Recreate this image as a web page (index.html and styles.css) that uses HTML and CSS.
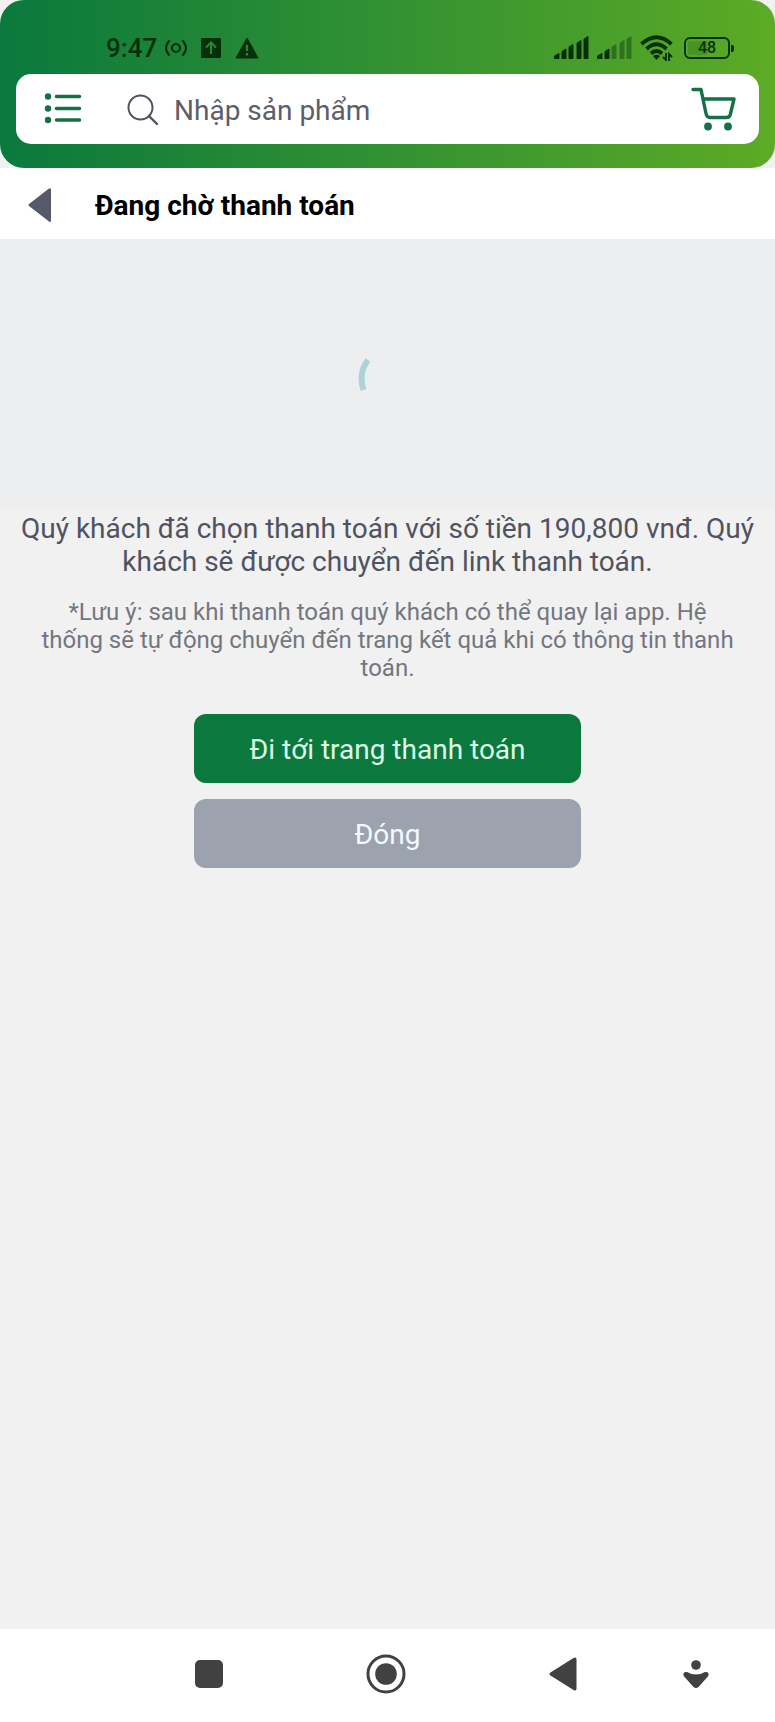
FILE: index.html
```html
<!DOCTYPE html>
<html lang="vi">
<head>
<meta charset="utf-8">
<meta name="viewport" content="width=device-width, initial-scale=1">
<title>Đang chờ thanh toán</title>
<link rel="stylesheet" href="styles.css">
</head>
<body>
<div class="app">
  <header class="header">
    <div class="status">
      <div class="status-left">
        <span class="clock">9:47</span>
        <svg class="icon-hotspot" width="22" height="18" viewBox="0 0 22 18" fill="none" stroke="currentColor" stroke-width="2.200" stroke-linecap="round"><circle cx="11" cy="9" r="4"/><path d="M4 2Q-2 9 4 16M18 2Q24 9 18 16"/></svg>
        <svg class="icon-upload" width="20" height="20" viewBox="0 0 20 20"><rect width="20" height="20" rx="1" fill="currentColor"/><path d="M10 16V5M5 9.500L10 4.500L15 9.500" fill="none" stroke="#2b8535" stroke-width="2"/></svg>
        <svg class="icon-warning" width="24" height="22" viewBox="0 0 24 22"><path d="M12 1L23 21H1Z" fill="currentColor" stroke="currentColor" stroke-linejoin="round"/><path d="M12 8V14M12 16V18.500" stroke="#2b8535" stroke-width="2.200"/></svg>
      </div>
      <div class="status-right">
        <svg width="35" height="24" viewBox="0 0 35 24" fill="currentColor" stroke="currentColor" stroke-linejoin="round"><path d="M.5 22.500V20L5 17.500V22.500ZM8 22.500V15.500L12 13V22.500ZM15 22.500V11L19 8.500V22.500ZM23 22.500V7L27 4.500V22.500ZM30 22.500V3L34 .5V22.500Z"/></svg>
        <svg width="35" height="24" viewBox="0 0 35 24" fill="currentColor" stroke="currentColor" stroke-linejoin="round"><path d="M.5 22.500V20L5 17.500V22.500ZM8 22.500V15.500L12 13V22.500Z"/><path opacity=".4" d="M15 22.500V11L19 8.500V22.500ZM23 22.500V7L27 4.500V22.500ZM30 22.500V3L34 .5V22.500Z"/></svg>
        <svg width="34" height="26" viewBox="0 0 34 26" fill="none" stroke="currentColor" stroke-width="3.800"><path d="M1.500 9Q16.500-4.500 31.500 9M6.500 14Q16.500 4.500 26.500 14M11 18.500Q16.500 13.500 22 18.500"/><path d="M13 21Q16.500 18.500 20 21L16.500 25Z" fill="currentColor" stroke="none"/><path d="M26 18V25L23 22M29 26V19L32 22" stroke-width="1.800"/></svg>
        <span class="battery"><span class="battery-fill"></span><span class="battery-text">48</span></span>
      </div>
    </div>
    <form class="search">
      <button class="icon-button" type="button" aria-label="Menu">
        <svg width="38" height="32" viewBox="0 0 38 32" stroke="currentColor" stroke-width="3.600" stroke-linecap="round" fill="currentColor"><path d="M12.500 3.500H35.500M12.500 15.500H35.500M12.500 27H35.500"/><g stroke="none"><circle cx="4" cy="3.500" r="3.200"/><circle cx="4" cy="15.500" r="3.200"/><circle cx="4" cy="27" r="3.200"/></g></svg>
      </button>
      <label class="search-label" for="query" aria-label="Nhập sản phẩm">
        <svg width="32" height="32" viewBox="0 0 32 32" fill="none" stroke="currentColor" stroke-width="2" stroke-linecap="round"><circle cx="13.500" cy="14.500" r="12"/><path d="M22 23L30 31" stroke-width="2.400"/></svg>
      </label>
      <input class="search-input" id="query" type="text" placeholder="Nhập sản phẩm">
      <button class="icon-button" type="button" aria-label="Giỏ hàng">
        <svg width="46" height="44" viewBox="0 0 46 44" fill="none" stroke="currentColor" stroke-width="3.400" stroke-linecap="round" stroke-linejoin="round"><path d="M2 2.500H10L15 26.500Q15.800 30.500 19 30.500H35.500Q38.500 30.500 39.300 27.500L43 12H12.500"/><g fill="currentColor" stroke="none"><circle cx="17" cy="39.500" r="3.900"/><circle cx="37" cy="39.500" r="3.900"/></g></svg>
      </button>
    </form>
  </header>
  <div class="titlebar">
    <button class="icon-button back" type="button" aria-label="Quay lại">
      <svg width="24" height="36" viewBox="0 0 24 36" fill="currentColor"><path d="M1 16L21 .5Q23-.5 23 2V32Q23 35 21 33.500L1 18Q0 17 1 16Z"/></svg>
    </button>
    <h1 class="title">Đang chờ thanh toán</h1>
  </div>
  <main class="content">
    <div class="loader" role="status" aria-label="Đang tải">
      <svg width="60" height="60" viewBox="0 0 60 60" fill="none" stroke="#aed2d8" stroke-width="6"><path d="M10 16Q0 29 5.500 46"/></svg>
    </div>
    <p class="message">Quý khách đã chọn thanh toán với số tiền 190,800 vnđ. Quý khách sẽ được chuyển đến link thanh toán.</p>
    <p class="note">*Lưu ý: sau khi thanh toán quý khách có thể quay lại app. Hệ thống sẽ tự động chuyển đến trang kết quả khi có thông tin thanh toán.</p>
    <div class="actions">
      <button class="button primary" type="button">Đi tới trang thanh toán</button>
      <button class="button secondary" type="button">Đóng</button>
    </div>
  </main>
  <nav class="navbar" aria-label="Điều hướng">
    <button class="icon-button" type="button" aria-label="Gần đây"><svg width="30" height="30" viewBox="0 0 30 30"><rect x="1" y="1" width="28" height="28" rx="5" fill="currentColor"/></svg></button>
    <button class="icon-button" type="button" aria-label="Trang chủ"><svg width="40" height="40" viewBox="0 0 40 40"><circle cx="20" cy="20" r="18" fill="none" stroke="currentColor" stroke-width="3"/><circle cx="20" cy="20" r="10.800" fill="currentColor"/></svg></button>
    <button class="icon-button" type="button" aria-label="Trở về"><svg width="28" height="34" viewBox="0 0 28 34" fill="currentColor"><path d="M1.500 15.500L24.500 1Q27.500-.5 27.500 2.500V31.500Q27.500 34.500 24.500 33L1.500 18.500Q-.5 17 1.500 15.500Z"/></svg></button>
    <button class="icon-button" type="button" aria-label="Ẩn thanh"><svg width="26" height="28" viewBox="0 0 26 28" fill="currentColor"><circle cx="13" cy="5" r="4.800"/><path d="M4 12Q13 17 22 12Q26 11.500 25.500 15Q25.500 16 24 17.500L15.500 27Q13 29 10.500 27L2 17.500Q.5 16 .5 15Q0 11.500 4 12Z"/></svg></button>
  </nav>
</div>
</body>
</html>
```
FILE: styles.css
```css
* {
  box-sizing: border-box;
}

body {
  margin: 0;
  background: #f1f1f1;
  color: #50535f;
  font-family: Roboto, "Noto Sans", sans-serif;
}

svg {
  display: block;
  flex: none;
}

button,
input {
  font: inherit;
}

.app {
  display: flex;
  flex-direction: column;
  min-height: 100vh;
}

.header {
  padding: 22px 16px 24px;
  border-radius: 24px;
  background: linear-gradient(90deg, #0a793d, #329132 50%, #5dab25);
}

.status {
  display: flex;
  justify-content: space-between;
  align-items: center;
  height: 52px;
  padding: 0 25px 0 90px;
  color: #06300a;
}

.status-left,
.status-right {
  display: flex;
  align-items: center;
}

.status-right {
  gap: 8px;
}

.clock {
  font-size: 26px;
  font-weight: 500;
  line-height: 32px;
}

.icon-hotspot {
  margin-left: 8px;
}

.icon-upload,
.icon-warning {
  margin-left: 14px;
}

.battery {
  display: flex;
  position: relative;
  align-items: center;
  justify-content: center;
  width: 46px;
  height: 22px;
  margin: 0 4px 0 2px;
  border: 2px solid currentColor;
  border-radius: 6px;
}

.battery::after {
  content: "";
  position: absolute;
  top: 6px;
  right: -6px;
  width: 3px;
  height: 7px;
  border-radius: 0 2px 2px 0;
  background: currentColor;
}

.battery-fill {
  position: absolute;
  top: 2px;
  bottom: 2px;
  left: 2px;
  width: 48%;
  border-radius: 3px;
  background: #489322;
}

.battery-text {
  position: relative;
  font-size: 16px;
  font-weight: 500;
  line-height: 18px;
}

.search {
  display: flex;
  align-items: center;
  height: 70px;
  padding: 0 22px 0 28px;
  border-radius: 15px;
  background: #fff;
}

.icon-button {
  display: flex;
  align-items: center;
  justify-content: center;
  padding: 0;
  border: 0;
  background: none;
  color: #157145;
  cursor: pointer;
}

.search-label {
  margin-left: 45px;
}

.search-input {
  flex: 1;
  min-width: 0;
  height: 48px;
  padding: 2px 15px 0;
  border: 0;
  outline: 0;
  background: none;
  font-size: 28px;
}

.search-input::placeholder {
  color: #5c5e6a;
  opacity: 1;
}

.titlebar {
  display: flex;
  align-items: center;
  gap: 43px;
  height: 71px;
  padding: 4px 28px 0;
  background: #fff;
}

.back {
  color: #555969;
}

.title {
  margin: 0;
  color: #000;
  font-size: 28px;
  font-weight: 700;
  line-height: 36px;
}

.content {
  flex: 1;
}

.loader {
  display: flex;
  align-items: center;
  justify-content: center;
  height: 269px;
  background: #edeef0;
}

.message {
  margin: 0;
  padding: 4px 16px 0;
  font-size: 28px;
  line-height: 33px;
  text-align: center;
}

.note {
  margin: 20px 0 0;
  padding: 0 40px;
  color: #737680;
  font-size: 24px;
  line-height: 28px;
  text-align: center;
}

.actions {
  display: flex;
  flex-direction: column;
  gap: 16px;
  width: 50%;
  margin: 32px auto;
}

.button {
  height: 69px;
  padding: 2px 16px 0;
  border: 0;
  border-radius: 12px;
  font-size: 28px;
  cursor: pointer;
}

.primary {
  background: #0b793e;
  color: #dcfce7;
}

.secondary {
  background: #9ca2ae;
  color: #f0f9ff;
}

.navbar {
  display: grid;
  grid-template-columns: 2fr 2fr 2fr 1fr;
  height: 93px;
  padding: 0 35px 4px 121px;
  background: #fff;
}

.navbar .icon-button {
  color: #414141;
}
```
